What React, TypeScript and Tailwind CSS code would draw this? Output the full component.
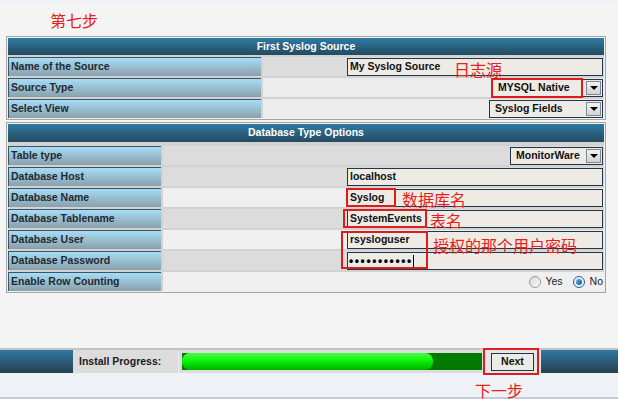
import React from "react";

const T = "font-['Liberation_Sans',Arial,sans-serif]";
const CJK = "font-['Noto_Sans_CJK_SC','Noto_Sans',sans-serif]";

function Label({ w, children }: { w: string; children: React.ReactNode }) {
  return (
    <div
      className={`shrink-0 ${w} h-full flex items-center pl-[2px] border-l border-t border-[#3a5666] bg-linear-to-b from-[#a6ddf6] to-[#8aa0ab] text-[10.5px] font-bold text-[#1d2a33]`}
    >
      {children}
    </div>
  );
}

function Row({
  w,
  label,
  bg,
  children,
}: {
  w: string;
  label: string;
  bg: string;
  children?: React.ReactNode;
}) {
  return (
    <div className="flex h-[19px] gap-[2px]">
      <Label w={w}>{label}</Label>
      <div className={`flex-1 ${bg} flex items-center justify-end pr-[1px]`}>{children}</div>
    </div>
  );
}

function Header({ title, h }: { title: string; h: string }) {
  return (
    <div
      className={`${h} flex items-center justify-center bg-linear-to-b from-[#2f7ba4] to-[#244a5f] text-white text-[10.5px] font-bold`}
    >
      {title}
    </div>
  );
}

function Input({ value }: { value: string }) {
  return (
    <div className="w-[256px] h-[18px] border border-[#22364a] bg-[#eeebe5] flex items-center pl-[2px] text-[10.5px] font-bold text-[#111]">
      {value}
    </div>
  );
}

function Select({ value, w }: { value: string; w: string }) {
  return (
    <div className={`${w} h-[18px] border border-[#22364a] bg-[#eeebe5] flex items-center`}>
      <span className="flex-1 pl-[5px] text-[10.5px] font-bold text-[#111]">{value}</span>
      <div className="w-[15px] h-[14px] mr-[1px] border border-[#7d8a96] bg-linear-to-b from-[#f2f2f2] to-[#d2d2d2] flex items-end justify-center pb-[4px]">
        <div className="w-0 h-0 border-l-[4px] border-r-[4px] border-t-[4px] border-l-transparent border-r-transparent border-t-black" />
      </div>
    </div>
  );
}

function Radio({ checked }: { checked?: boolean }) {
  return (
    <div
      className={`w-[12px] h-[12px] rounded-full border flex items-center justify-center ${
        checked ? "border-[#2f5f86] bg-[#e8eef4]" : "border-[#9a9a9a] bg-linear-to-br from-[#d8d8d8] to-[#fafafa]"
      }`}
    >
      {checked && <div className="w-[6px] h-[6px] rounded-full bg-linear-to-br from-[#5fb0f0] to-[#1252a0]" />}
    </div>
  );
}

function RedBox({ cls }: { cls: string }) {
  return <div className={`absolute border-2 border-[#e01b1b] ${cls}`} />;
}

function Note({ cls, children }: { cls: string; children: React.ReactNode }) {
  return (
    <div className={`absolute ${CJK} text-[16px] leading-[16px] text-[#e8201c] ${cls}`}>{children}</div>
  );
}

export default function App() {
  return (
    <div className={`relative w-[618px] h-[399px] overflow-hidden bg-[#f4f4f4] ${T} flex flex-col`}>
      <div className="h-[3px] bg-[#eef1f5]" />
      <div className={`h-[33px] pl-[50px] pt-[9px] ${CJK} text-[16px] leading-[16px] text-[#e8201c]`}>第七步</div>

      {/* First table */}
      <div className="mx-[6px] w-[600px] border border-[#a4a4a4] p-[1px] bg-[#f0f0f0]">
        <div className="flex flex-col gap-[2px] bg-[#d2d2d2]">
          <Header title="First Syslog Source" h="h-[17px]" />
          <Row w="w-[253px]" label="Name of the Source" bg="bg-[#dcdcdc]">
            <Input value="My Syslog Source" />
          </Row>
          <Row w="w-[253px]" label="Source Type" bg="bg-[#ececec]">
            <Select value="MYSQL Native" w="w-[111px]" />
          </Row>
          <Row w="w-[253px]" label="Select View" bg="bg-[#ececec]">
            <Select value="Syslog Fields" w="w-[114px]" />
          </Row>
        </div>
      </div>

      {/* Second table */}
      <div className="mx-[6px] mt-[2px] w-[600px] border border-[#a4a4a4] p-[1px] bg-[#f0f0f0]">
        <div className="flex flex-col gap-[2px] bg-[#d2d2d2]">
          <div className="mb-[2px]">
            <Header title="Database Type Options" h="h-[18px]" />
          </div>
          <Row w="w-[153px]" label="Table type" bg="bg-[#dcdcdc]">
            <Select value="MonitorWare" w="w-[93px]" />
          </Row>
          <Row w="w-[153px]" label="Database Host" bg="bg-[#dcdcdc]">
            <Input value="localhost" />
          </Row>
          <Row w="w-[153px]" label="Database Name" bg="bg-[#efefef]">
            <Input value="Syslog" />
          </Row>
          <Row w="w-[153px]" label="Database Tablename" bg="bg-[#dcdcdc]">
            <Input value="SystemEvents" />
          </Row>
          <Row w="w-[153px]" label="Database User" bg="bg-[#efefef]">
            <Input value="rsysloguser" />
          </Row>
          <Row w="w-[153px]" label="Database Password" bg="bg-[#dcdcdc]">
            <div className="w-[256px] h-[18px] border border-[#22364a] bg-[#eeebe5] flex items-center pl-[1px]">
              <span className="text-[12px] font-bold text-black tracking-[1.6px] leading-none">•••••••••••</span>
              <span className="w-[1px] h-[12px] bg-black" />
            </div>
          </Row>
          <Row w="w-[153px]" label="Enable Row Counting" bg="bg-[#efefef]">
            <div className="flex items-center text-[10.5px] text-[#222]">
              <Radio />
              <span className="ml-[4px] mr-[10px]">Yes</span>
              <Radio checked />
              <span className="ml-[5px]">No</span>
            </div>
          </Row>
        </div>
      </div>

      <div className="flex-1" />

      {/* Bottom bar */}
      <div className="h-[2px] bg-[#c4c4c4]" />
      <div className="h-[23px] flex bg-linear-to-b from-[#2f79a3] to-[#253f4e]">
        <div className="w-[73px]" />
        <div className="w-[105px] bg-[#dcdcdc] flex items-center pl-[6px] text-[10.5px] font-bold text-[#1a1a1a]">
          Install Progress:
        </div>
        <div className="w-[305px] bg-[#dcdcdc] flex items-center pl-[3px] border-l border-[#ececec]">
          <div className="w-[300px] h-[17px] bg-[#007a00] flex items-center">
            <div className="w-[251px] h-[17px] rounded-[8px] bg-linear-to-b from-[#40ff40] via-[#00f000] to-[#00b000]" />
          </div>
        </div>
        <div className="w-[58px] bg-[#e6e6e6] flex items-center pl-[8px]">
          <div className="w-[43px] h-[18px] border border-[#22364a] bg-[#ecebe5] flex items-center justify-center text-[10.5px] font-bold text-[#111]">
            Next
          </div>
        </div>
        <div className="flex-1" />
      </div>
      <div className="h-[24px] bg-[#eef1f5]" />
      <div className="h-[2px] bg-[#c3ccd6]" />

      {/* Annotations */}
      <Note cls="left-[454px] top-[61px]">日志源</Note>
      <RedBox cls="left-[491px] top-[78px] w-[92px] h-[20px]" />
      <RedBox cls="left-[346px] top-[188px] w-[50px] h-[19px]" />
      <Note cls="left-[402px] top-[191px]">数据库名</Note>
      <RedBox cls="left-[343px] top-[209px] w-[84px] h-[19px]" />
      <Note cls="left-[430px] top-[212px]">表名</Note>
      <RedBox cls="left-[341px] top-[231px] w-[87px] h-[38px]" />
      <Note cls="left-[433px] top-[237px]">授权的那个用户密码</Note>
      <RedBox cls="left-[483px] top-[348px] w-[56px] h-[27px]" />
      <Note cls="left-[475px] top-[382px]">下一步</Note>
    </div>
  );
}
